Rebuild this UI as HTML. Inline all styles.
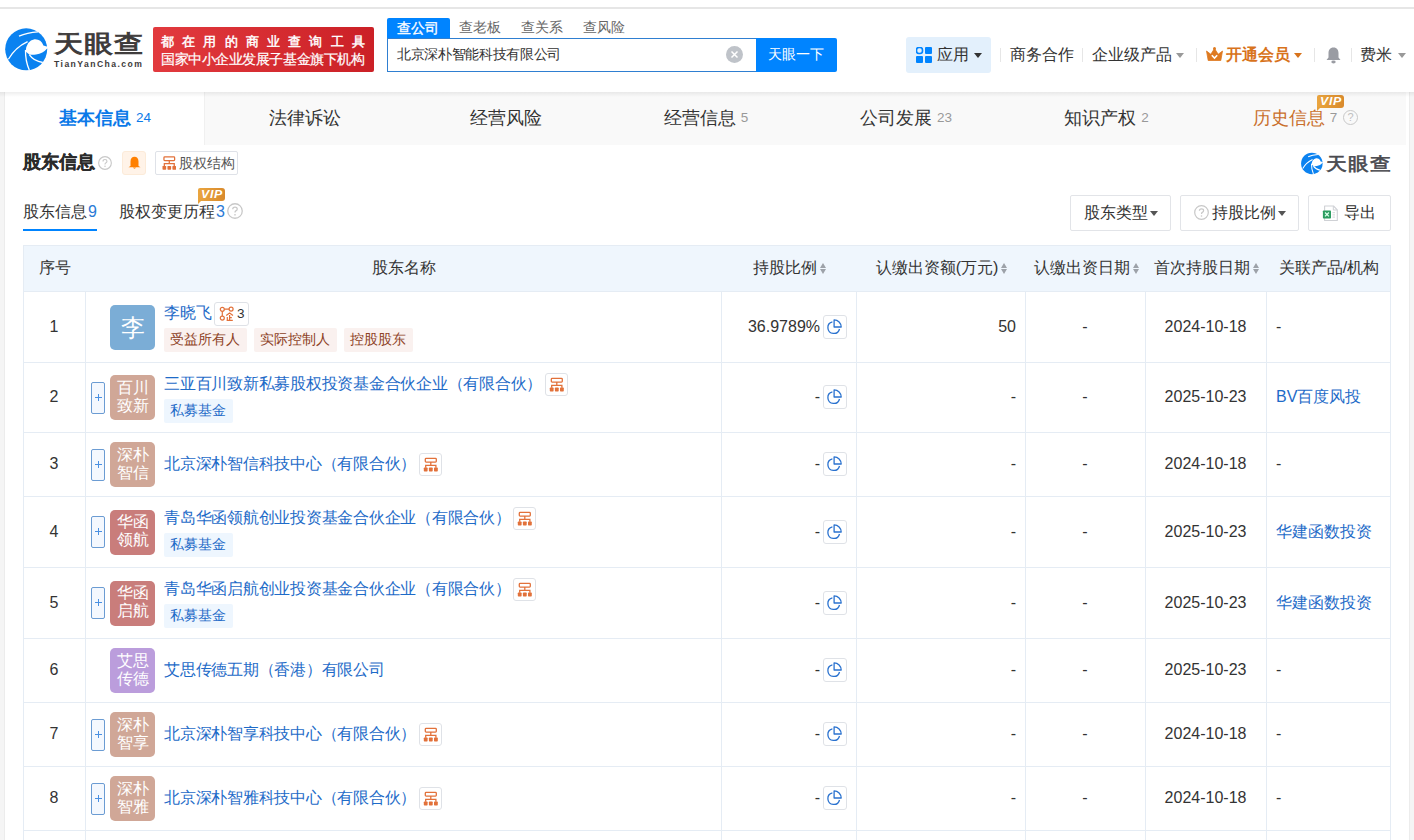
<!DOCTYPE html>
<html><head><meta charset="utf-8">
<style>
*{box-sizing:border-box;margin:0;padding:0}
html,body{width:1414px;height:840px;overflow:hidden}
body{position:relative;background:#f5f5f5;font-family:"Liberation Sans",sans-serif;color:#333}
.abs{position:absolute}
.t{position:absolute;white-space:nowrap}
#top{left:0;top:0;width:1414px;height:92px;background:#fff}
#topline{left:0;top:7px;width:1414px;height:2px;background:#e6e6e6}
#card{left:5px;top:92px;width:1404px;height:760px;background:#fff;box-shadow:-1px 0 0 #ececec,1px 0 0 #ececec}
#tabs{left:5px;top:92px;width:1401px;height:53px;background:#f9f9f9}
.tab{position:absolute;top:0;height:53px;font-size:18px;line-height:53px;text-align:center;color:#333}
.tab .n{font-size:13.5px;color:#999;margin-left:5px;position:relative;top:-2px}
.caret{width:0;height:0;border-left:4px solid transparent;border-right:4px solid transparent;border-top:5px solid #999}
.sep{top:48px;width:1px;height:14px;background:#e6e6e6}
.btn{position:absolute;border:1px solid #e2e4e8;border-radius:2px;background:#fff}
.vip{position:absolute;width:27px;height:12.5px;background:linear-gradient(90deg,#eaa53f,#d98a2c);border-radius:2px 3px 3px 0}
.vip:after{content:"";position:absolute;left:0;top:12px;border-left:4px solid #e6a03b;border-bottom:4px solid transparent}
.vip span{position:absolute;left:2.5px;top:0;font-size:11px;line-height:12.5px;font-weight:bold;font-style:italic;color:#fff;letter-spacing:0.6px;transform:scaleX(1.12);transform-origin:0 0}
.hl{position:absolute;left:23px;width:1368px;height:1px;background:#e5ecf4}
.vl{position:absolute;width:1px;background:#e5ecf4}
.th{position:absolute;top:257px;height:22px;font-size:16px;line-height:22px;color:#333;text-align:center;white-space:nowrap}
.sort{display:inline-block;width:7px;height:11px;margin-left:3px;vertical-align:-1px;position:relative}
.sort:before{content:"";position:absolute;left:0;top:0;border-left:3.5px solid transparent;border-right:3.5px solid transparent;border-bottom:5px solid #9da2a9}
.sort:after{content:"";position:absolute;left:0;top:6px;border-left:3.5px solid transparent;border-right:3.5px solid transparent;border-top:5px solid #9da2a9}
.td{position:absolute;height:22px;font-size:16px;line-height:22px;color:#333;white-space:nowrap}
.lnk{color:#1e6bc8}
.plus{position:absolute;left:91px;width:14px;height:32px;border:1px solid #6b9cd3;border-radius:2px;background:#f4f8fe}
.plus span{position:absolute;left:3px;top:14px;width:7px;height:1.4px;background:#4a90e2;font-size:0}.plus span:after{content:"";position:absolute;left:2.8px;top:-2.8px;width:1.4px;height:7px;background:#4a90e2}
.av{position:absolute;left:110px;width:45px;height:45px;border-radius:5px;color:#fff;text-align:center}
.av1{display:block;font-size:24px;line-height:45px}
.av2{display:block;font-size:16px;line-height:18px;padding-top:3.5px}
.nm{position:absolute;left:164px;height:24px;font-size:16px;line-height:24px;color:#1e6bc8;white-space:nowrap;letter-spacing:-0.25px}
.badge{position:absolute;left:214px;width:35px;height:24.5px;border:1px solid #dfe2e7;border-radius:3px;background:#fff}
.badge svg{position:absolute;left:-1px;top:-1px}
.badge span{position:absolute;left:22px;top:1px;font-size:13.5px;line-height:20px;color:#333}
.orgb{position:absolute;width:23px;height:23.5px;border:1px solid #dfe2e7;border-radius:3px;background:#fff}
.orgb svg{position:absolute;left:-1px;top:-1px}
.tag{position:absolute;height:24px;font-size:14px;line-height:22px;text-align:center;border-radius:2px;white-space:nowrap}
.tag.r{background:#faf1ef;color:#8e4226}
.tag.b{background:#eef6fe;color:#1e6bc8}
.pie{position:absolute;left:823px;width:23.5px;height:24px;border:1px solid #dfe2e7;border-radius:3px;background:#fff}
.pie svg{position:absolute;left:-1px;top:-1px}
.q{display:inline-block;width:15px;height:15px;border:1.2px solid #c8c8c8;border-radius:50%;position:relative;vertical-align:-1px}
.q:after{content:"?";position:absolute;left:0;top:0;width:12.6px;text-align:center;font-size:11px;line-height:12.6px;color:#c0c0c0;font-style:normal}
</style></head><body>
<div id="top" class="abs">
  <svg class="abs" style="left:5px;top:28px" width="43" height="43" viewBox="0 0 43 43"><circle cx="21.2" cy="21.3" r="21" fill="#0b82f0"/><path d="M20.6 23.5Q21.5 12.5 29.5 11.2Q36 10.8 38.4 17.4L42.6 18.8L42.4 20.2Q38 25.5 31 26.6Q27 27 24.3 26.6Z" fill="#fff"/><path d="M14 8.2Q22 4.6 33 3.9" stroke="#fff" stroke-width="1.3" fill="none"/><path d="M3.4 31.3Q10 19.5 22.6 13.6" stroke="#fff" stroke-width="1.3" fill="none"/><path d="M20.5 22Q20.3 33 24.3 42" stroke="#fff" stroke-width="1.3" fill="none"/><path d="M24.3 26.6Q28.5 33 37.8 34.5" stroke="#fff" stroke-width="1.3" fill="none"/></svg>
  <div class="t" style="left:53.5px;top:27.5px;font-size:29px;line-height:32px;color:#3d3a3a;letter-spacing:1px;-webkit-text-stroke:1.1px #3d3a3a;transform:scaleY(0.82);transform-origin:0 50%">天眼查</div>
  <div class="t" style="left:54px;top:58px;font-size:8.6px;line-height:12px;font-weight:bold;color:#3d3a3a;letter-spacing:1.45px">TianYanCha.com</div>
  <div class="abs" style="left:153px;top:27px;width:221px;height:45px;border-radius:2px;background:linear-gradient(90deg,#e23a3e,#cb2026)"></div>
  <div class="t" style="left:161px;top:33px;font-size:13px;line-height:17px;color:#fff;letter-spacing:8.2px;-webkit-text-stroke:0.45px #fff">都在用的商业查询工具</div>
  <div class="t" style="left:161px;top:51px;font-size:13.5px;line-height:18px;color:#fff;letter-spacing:-0.45px;-webkit-text-stroke:0.2px #fff">国家中小企业发展子基金旗下机构</div>
  <div class="abs" style="left:387px;top:18px;width:63px;height:21px;background:#0084ff;border-radius:2px 2px 0 0"></div>
  <div class="t" style="left:397px;top:19px;font-size:14px;line-height:18px;color:#fff;-webkit-text-stroke:0.35px #fff">查公司</div>
  <div class="t" style="left:459px;top:18px;font-size:14px;line-height:18px;color:#666">查老板</div>
  <div class="t" style="left:521px;top:18px;font-size:14px;line-height:18px;color:#666">查关系</div>
  <div class="t" style="left:583px;top:18px;font-size:14px;line-height:18px;color:#666">查风险</div>
  <div class="abs" style="left:387px;top:38px;width:370px;height:34px;border:1px solid #2f7fd1;border-right:none;background:#fff"></div>
  <div class="t" style="left:397px;top:45px;font-size:13.5px;line-height:20px;color:#333;letter-spacing:-0.33px">北京深朴智能科技有限公司</div>
  <svg class="abs" style="left:726px;top:46px" width="17" height="17" viewBox="0 0 17 17"><circle cx="8.5" cy="8.5" r="8.5" fill="#bfc3c9"/><path d="M5.5 5.5L11.5 11.5M11.5 5.5L5.5 11.5" stroke="#fff" stroke-width="1.5"/></svg>
  <div class="abs" style="left:756px;top:38px;width:81px;height:34px;background:#0084ff;border-radius:0 2px 2px 0"></div>
  <div class="t" style="left:768px;top:44px;font-size:14px;line-height:20px;color:#fff">天眼一下</div>
  <div class="abs" style="left:906px;top:37px;width:85px;height:36px;background:#e3f0fc;border-radius:3px"></div>
  <svg class="abs" style="left:916px;top:47px" width="16" height="16" viewBox="0 0 16 16"><rect x="0.5" y="0.5" width="6" height="6" rx="2.5" fill="none" stroke="#0084ff" stroke-width="1.6"/><rect x="9" y="0" width="7" height="7" rx="1" fill="#0084ff"/><rect x="0" y="9" width="7" height="7" rx="1" fill="#0084ff"/><rect x="9" y="9" width="7" height="7" rx="1" fill="#0084ff"/></svg>
  <div class="t" style="left:937px;top:45px;font-size:16px;line-height:20px;color:#333">应用</div>
  <div class="abs caret" style="left:974px;top:53px;border-top-color:#333"></div>
  <div class="abs sep" style="left:1000px"></div>
  <div class="t" style="left:1010px;top:45px;font-size:16px;line-height:20px;color:#333">商务合作</div>
  <div class="abs sep" style="left:1082px"></div>
  <div class="t" style="left:1092px;top:45px;font-size:16px;line-height:20px;color:#333">企业级产品</div>
  <div class="abs caret" style="left:1176px;top:53px"></div>
  <div class="abs sep" style="left:1196px"></div>
  <svg class="abs" style="left:1206px;top:47px" width="17" height="14" viewBox="0 0 17 14"><path d="M0.5 4L4.8 7.3L8.5 1.5L12.2 7.3L16.5 4L14.8 13.5H2.2Z" fill="#de7a21" stroke="#de7a21" stroke-width="0.8" stroke-linejoin="round"/><circle cx="8.5" cy="1.6" r="1.5" fill="#de7a21"/><path d="M5.8 8.2L8.5 11L11.2 8.2" stroke="#fff" stroke-width="1.6" fill="none"/></svg>
  <div class="t" style="left:1226px;top:45px;font-size:16px;line-height:20px;color:#d8731c;font-weight:bold">开通会员</div>
  <div class="abs caret" style="left:1294px;top:53px;border-top-color:#d8731c"></div>
  <div class="abs sep" style="left:1314px"></div>
  <svg class="abs" style="left:1325px;top:46px" width="17" height="18" viewBox="0 0 17 18"><path d="M8.5 1.5C5 1.5 3.5 4 3.5 7V11.5L1.5 14H15.5L13.5 11.5V7C13.5 4 12 1.5 8.5 1.5Z" fill="#9a9ca3"/><ellipse cx="8.5" cy="16" rx="2.2" ry="1.4" fill="#9a9ca3"/></svg>
  <div class="abs sep" style="left:1351px"></div>
  <div class="t" style="left:1360px;top:45px;font-size:16px;line-height:20px;color:#333">费米</div>
  <div class="abs caret" style="left:1398px;top:53px"></div>
</div>
<div id="topline" class="abs"></div>
<div class="abs" style="left:0;top:92px;width:1414px;height:5px;background:linear-gradient(rgba(0,0,0,0.065),rgba(0,0,0,0));z-index:5"></div>
<div id="card" class="abs"></div>
<div id="tabs" class="abs">
  <div class="tab" style="left:0;width:200px;background:#fff;color:#0b79e8;font-weight:bold">基本信息<span class="n" style="color:#0b79e8;font-weight:normal">24</span></div>
  <div class="tab" style="left:199px;width:201px;border-left:1px solid #f0f0f0">法律诉讼</div>
  <div class="tab" style="left:400px;width:201px">经营风险</div>
  <div class="tab" style="left:601px;width:200px">经营信息<span class="n">5</span></div>
  <div class="tab" style="left:801px;width:200px">公司发展<span class="n">23</span></div>
  <div class="tab" style="left:1001px;width:201px">知识产权<span class="n">2</span></div>
  <div class="tab" style="left:1202px;width:199px;color:#c96f2c;padding-right:2px">历史信息<span class="n">7</span><i class="q" style="margin-left:6px"></i></div>
</div>

<div class="t" style="left:22.5px;top:150px;font-size:17.5px;line-height:24px;font-weight:bold;color:#2b2b2b;-webkit-text-stroke:0.3px #2b2b2b">股东信息</div>
<svg class="abs" style="left:98px;top:156px" width="14" height="14" viewBox="0 0 15 15"><circle cx="7.5" cy="7.5" r="6.8" fill="none" stroke="#c8c8c8" stroke-width="1.2"/><path d="M5.4 5.8Q5.4 3.8 7.5 3.8Q9.6 3.8 9.6 5.6Q9.6 6.8 8.3 7.4Q7.5 7.8 7.5 9" stroke="#c8c8c8" stroke-width="1.2" fill="none"/><circle cx="7.5" cy="11" r="0.8" fill="#c8c8c8"/></svg>
<div class="abs" style="left:122px;top:151px;width:24px;height:24px;background:#fff3e8;border:1px solid #fcebd9;border-radius:3px"></div>
<svg class="abs" style="left:127.5px;top:156px" width="13" height="14" viewBox="0 0 13 14"><path d="M6.5 0.8C4 0.8 2.5 2.8 2.5 5.5V10L0.5 11.3H12.5L10.5 10V5.5C10.5 2.8 9 0.8 6.5 0.8Z" fill="#ff8000"/><path d="M4.8 11.5Q6.5 13.8 8.2 11.5Z" fill="#ff8000"/></svg>
<div class="abs" style="left:155px;top:151px;width:83px;height:24px;background:#fff;border:1px solid #dfe2e8;border-radius:2px"></div>
<svg class="abs" style="left:161.7px;top:156px" width="14.2" height="14" viewBox="4.3 4.6 14.6 14"><rect x="6.3" y="5.4" width="11" height="3.7" rx="0.8" fill="none" stroke="#e2713a" stroke-width="1.3"/><path d="M11.8 9.1V12.3M6.7 14.8V12.3H16.9V14.8" stroke="#e2713a" stroke-width="1.3" fill="none"/><rect x="4.8" y="14.6" width="3.8" height="3.9" rx="0.7" fill="#e2713a"/><rect x="9.9" y="14.6" width="3.8" height="3.9" rx="0.7" fill="#e2713a"/><rect x="15" y="14.6" width="3.8" height="3.9" rx="0.7" fill="#e2713a"/></svg>
<div class="t" style="left:179px;top:153px;font-size:14px;line-height:20px;color:#555">股权结构</div>

<svg class="abs" style="left:1301px;top:152px" width="22" height="23" viewBox="0 0 43 43"><circle cx="21.2" cy="21.3" r="21" fill="#0b82f0"/><path d="M20.6 23.5Q21.5 12.5 29.5 11.2Q36 10.8 38.4 17.4L42.6 18.8L42.4 20.2Q38 25.5 31 26.6Q27 27 24.3 26.6Z" fill="#fff"/><path d="M14 8.2Q22 4.6 33 3.9" stroke="#fff" stroke-width="2" fill="none"/><path d="M3.4 31.3Q10 19.5 22.6 13.6" stroke="#fff" stroke-width="2" fill="none"/><path d="M20.5 22Q20.3 33 24.3 42" stroke="#fff" stroke-width="2" fill="none"/><path d="M24.3 26.6Q28.5 33 37.8 34.5" stroke="#fff" stroke-width="2" fill="none"/></svg>
<div class="t" style="left:1326px;top:150px;font-size:21px;line-height:27px;color:#4a4a4f;letter-spacing:0.8px;-webkit-text-stroke:0.7px #4a4a4f;transform:scaleY(0.86);transform-origin:0 50%">天眼查</div>

<div class="t" style="left:23px;top:201px;font-size:16px;line-height:22px;color:#333">股东信息<span style="color:#2a7ad6;margin-left:1px">9</span></div>
<div class="abs" style="left:23px;top:229px;width:74px;height:2px;background:#0084ff"></div>
<div class="t" style="left:119px;top:201px;font-size:16px;line-height:22px;color:#333">股权变更历程<span style="color:#2a7ad6;margin-left:1px">3</span></div>
<svg class="abs" style="left:227px;top:203px" width="16" height="16" viewBox="0 0 15 15"><circle cx="7.5" cy="7.5" r="6.8" fill="none" stroke="#c8c8c8" stroke-width="1.2"/><path d="M5.4 5.8Q5.4 3.8 7.5 3.8Q9.6 3.8 9.6 5.6Q9.6 6.8 8.3 7.4Q7.5 7.8 7.5 9" stroke="#c8c8c8" stroke-width="1.2" fill="none"/><circle cx="7.5" cy="11" r="0.8" fill="#c8c8c8"/></svg>
<div class="vip" style="left:198px;top:188px"><span>VIP</span></div>

<div class="btn" style="left:1070px;top:195px;width:101px;height:36px"></div>
<div class="t" style="left:1084px;top:202px;font-size:16px;line-height:22px;color:#333">股东类型</div>
<div class="abs caret" style="left:1150px;top:211px;border-top-color:#555"></div>
<div class="btn" style="left:1180px;top:195px;width:119px;height:36px"></div>
<svg class="abs" style="left:1194px;top:205px" width="15" height="15" viewBox="0 0 15 15"><circle cx="7.5" cy="7.5" r="6.8" fill="none" stroke="#c8c8c8" stroke-width="1.2"/><path d="M5.4 5.8Q5.4 3.8 7.5 3.8Q9.6 3.8 9.6 5.6Q9.6 6.8 8.3 7.4Q7.5 7.8 7.5 9" stroke="#c8c8c8" stroke-width="1.2" fill="none"/><circle cx="7.5" cy="11" r="0.8" fill="#c8c8c8"/></svg>
<div class="t" style="left:1212px;top:202px;font-size:16px;line-height:22px;color:#333">持股比例</div>
<div class="abs caret" style="left:1278px;top:211px;border-top-color:#555"></div>
<div class="btn" style="left:1308px;top:195px;width:83px;height:36px"></div>
<svg class="abs" style="left:1322px;top:204.5px" width="17" height="17" viewBox="0 0 17 17"><path d="M2.6 1H11.5L15.3 4.8V15.5H2.6Z" fill="#fff" stroke="#cfd1d5" stroke-width="1.1" stroke-linejoin="round"/><path d="M11.3 1.2V5H15" fill="none" stroke="#cfd1d5" stroke-width="1"/><path d="M10.5 7.7H13M10.5 9.9H13M10.5 12.1H13" stroke="#dcdde0" stroke-width="1.2"/><rect x="0.9" y="5.4" width="8.1" height="8.1" rx="0.8" fill="#2c9d60"/><path d="M3 7.5L6.9 11.4M6.9 7.5L3 11.4" stroke="#d9ffe9" stroke-width="1.3"/></svg>
<div class="t" style="left:1344px;top:202px;font-size:16px;line-height:22px;color:#333">导出</div>
<div class="vip" style="left:1317px;top:95px"><span>VIP</span></div>
<!--TABLE-->
<div class="abs" style="left:23px;top:245px;width:1368px;height:46px;background:#eff6fd"></div>
<div class="hl" style="top:245px"></div>
<div class="hl" style="top:291px"></div>
<div class="hl" style="top:362px"></div>
<div class="hl" style="top:432px"></div>
<div class="hl" style="top:496px"></div>
<div class="hl" style="top:567px"></div>
<div class="hl" style="top:638px"></div>
<div class="hl" style="top:702px"></div>
<div class="hl" style="top:766px"></div>
<div class="hl" style="top:830px"></div>
<div class="vl" style="left:23px;top:245px;height:595px"></div>
<div class="vl" style="left:1390px;top:245px;height:595px"></div>
<div class="vl" style="left:85px;top:291px;height:549px"></div>
<div class="vl" style="left:721px;top:291px;height:549px"></div>
<div class="vl" style="left:856px;top:291px;height:549px"></div>
<div class="vl" style="left:1025px;top:291px;height:549px"></div>
<div class="vl" style="left:1145px;top:291px;height:549px"></div>
<div class="vl" style="left:1266px;top:291px;height:549px"></div>
<div class="th" style="left:23px;width:62px;text-align:left;padding-left:16px">序号</div>
<div class="th" style="left:85px;width:636px;padding-left:2px">股东名称</div>
<div class="th" style="left:721px;width:135px;padding-left:3px">持股比例<i class="sort"></i></div>
<div class="th" style="left:856px;width:169px;padding-left:3px">认缴出资额(万元)<i class="sort"></i></div>
<div class="th" style="left:1025px;width:120px;padding-left:3px">认缴出资日期<i class="sort"></i></div>
<div class="th" style="left:1145px;width:121px;padding-left:3px">首次持股日期<i class="sort"></i></div>
<div class="th" style="left:1266px;width:124px;padding-left:2px">关联产品/机构</div>
<div class="td" style="left:23px;width:62px;top:315.5px;text-align:center">1</div>
<div class="av" style="top:304.5px;background:#7badd6"><span class="av1">李</span></div>
<div class="nm" style="top:300.5px">李晓飞</div>
<div class="badge" style="top:301.5px"><svg width="34" height="23" viewBox="0 0 34 23"><circle cx="8.3" cy="7.3" r="2" fill="none" stroke="#e2713a" stroke-width="1.2"/><circle cx="17.1" cy="7.1" r="2" fill="none" stroke="#e2713a" stroke-width="1.2"/><circle cx="8.3" cy="16.1" r="2" fill="none" stroke="#e2713a" stroke-width="1.2"/><path d="M10.3 7.2H15.1M8.3 9.3V14.1M12.2 13.4L15.6 10.9L19 13.4M15.6 13V18.3M12.6 18.4H18.8M15.6 15.6H17.8M13.3 15V18.4" stroke="#e2713a" stroke-width="1.2" fill="none"/></svg><span>3</span></div>
<div class="tag r" style="left:164px;top:328.3px;width:82.6px">受益所有人</div>
<div class="tag r" style="left:254.0px;top:328.3px;width:82.6px">实际控制人</div>
<div class="tag r" style="left:344.0px;top:328.3px;width:68.6px">控股股东</div>
<div class="td" style="left:721px;width:99px;top:315.5px;text-align:right">36.9789%</div>
<div class="pie" style="top:314.5px"><svg width="23" height="24" viewBox="0 0 23 24"><path d="M9.4 6.8A5.9 5.9 0 1 0 16.5 14" fill="none" stroke="#2a72cf" stroke-width="1.3"/><path d="M11.1 12V4.9A7.1 7.1 0 0 1 18.2 12Z" fill="none" stroke="#2a72cf" stroke-width="1.3" stroke-linejoin="round"/></svg></div>
<div class="td" style="left:856px;width:160px;top:315.5px;text-align:right">50</div>
<div class="td" style="left:1025px;width:120px;top:315.5px;text-align:center">-</div>
<div class="td" style="left:1145px;width:121px;top:315.5px;text-align:center">2024-10-18</div>
<div class="td" style="left:1276px;top:315.5px">-</div>
<div class="td" style="left:23px;width:62px;top:386.0px;text-align:center">2</div>
<div class="plus" style="top:381.5px"><span>+</span></div>
<div class="av" style="top:375.0px;background:#d0a797"><span class="av2">百川<br>致新</span></div>
<div class="nm" style="top:371.5px">三亚百川致新私募股权投资基金合伙企业（有限合伙）</div>
<div class="orgb" style="left:545px;top:372.5px"><svg width="23" height="23" viewBox="0 0 23 23"><rect x="6.3" y="5.4" width="11" height="3.7" rx="0.8" fill="none" stroke="#e2713a" stroke-width="1.3"/><path d="M11.8 9.1V12.3M6.7 14.8V12.3H16.9V14.8" stroke="#e2713a" stroke-width="1.3" fill="none"/><rect x="4.8" y="14.6" width="3.8" height="3.9" rx="0.7" fill="#e2713a"/><rect x="9.9" y="14.6" width="3.8" height="3.9" rx="0.7" fill="#e2713a"/><rect x="15" y="14.6" width="3.8" height="3.9" rx="0.7" fill="#e2713a"/></svg></div>
<div class="tag b" style="left:164px;top:399.3px;width:68.6px">私募基金</div>
<div class="td" style="left:721px;width:99px;top:386.0px;text-align:right">-</div>
<div class="pie" style="top:385.0px"><svg width="23" height="24" viewBox="0 0 23 24"><path d="M9.4 6.8A5.9 5.9 0 1 0 16.5 14" fill="none" stroke="#2a72cf" stroke-width="1.3"/><path d="M11.1 12V4.9A7.1 7.1 0 0 1 18.2 12Z" fill="none" stroke="#2a72cf" stroke-width="1.3" stroke-linejoin="round"/></svg></div>
<div class="td" style="left:856px;width:160px;top:386.0px;text-align:right">-</div>
<div class="td" style="left:1025px;width:120px;top:386.0px;text-align:center">-</div>
<div class="td" style="left:1145px;width:121px;top:386.0px;text-align:center">2025-10-23</div>
<div class="td lnk" style="left:1276px;top:386.0px">BV百度风投</div>
<div class="td" style="left:23px;width:62px;top:453.0px;text-align:center">3</div>
<div class="plus" style="top:448.5px"><span>+</span></div>
<div class="av" style="top:442.0px;background:#d0a797"><span class="av2">深朴<br>智信</span></div>
<div class="nm" style="top:451.5px">北京深朴智信科技中心（有限合伙）</div>
<div class="orgb" style="left:419px;top:452.5px"><svg width="23" height="23" viewBox="0 0 23 23"><rect x="6.3" y="5.4" width="11" height="3.7" rx="0.8" fill="none" stroke="#e2713a" stroke-width="1.3"/><path d="M11.8 9.1V12.3M6.7 14.8V12.3H16.9V14.8" stroke="#e2713a" stroke-width="1.3" fill="none"/><rect x="4.8" y="14.6" width="3.8" height="3.9" rx="0.7" fill="#e2713a"/><rect x="9.9" y="14.6" width="3.8" height="3.9" rx="0.7" fill="#e2713a"/><rect x="15" y="14.6" width="3.8" height="3.9" rx="0.7" fill="#e2713a"/></svg></div>
<div class="td" style="left:721px;width:99px;top:453.0px;text-align:right">-</div>
<div class="pie" style="top:452.0px"><svg width="23" height="24" viewBox="0 0 23 24"><path d="M9.4 6.8A5.9 5.9 0 1 0 16.5 14" fill="none" stroke="#2a72cf" stroke-width="1.3"/><path d="M11.1 12V4.9A7.1 7.1 0 0 1 18.2 12Z" fill="none" stroke="#2a72cf" stroke-width="1.3" stroke-linejoin="round"/></svg></div>
<div class="td" style="left:856px;width:160px;top:453.0px;text-align:right">-</div>
<div class="td" style="left:1025px;width:120px;top:453.0px;text-align:center">-</div>
<div class="td" style="left:1145px;width:121px;top:453.0px;text-align:center">2024-10-18</div>
<div class="td" style="left:1276px;top:453.0px">-</div>
<div class="td" style="left:23px;width:62px;top:520.5px;text-align:center">4</div>
<div class="plus" style="top:516.0px"><span>+</span></div>
<div class="av" style="top:509.5px;background:#c97d7b"><span class="av2">华函<br>领航</span></div>
<div class="nm" style="top:505.5px">青岛华函领航创业投资基金合伙企业（有限合伙）</div>
<div class="orgb" style="left:513px;top:506.5px"><svg width="23" height="23" viewBox="0 0 23 23"><rect x="6.3" y="5.4" width="11" height="3.7" rx="0.8" fill="none" stroke="#e2713a" stroke-width="1.3"/><path d="M11.8 9.1V12.3M6.7 14.8V12.3H16.9V14.8" stroke="#e2713a" stroke-width="1.3" fill="none"/><rect x="4.8" y="14.6" width="3.8" height="3.9" rx="0.7" fill="#e2713a"/><rect x="9.9" y="14.6" width="3.8" height="3.9" rx="0.7" fill="#e2713a"/><rect x="15" y="14.6" width="3.8" height="3.9" rx="0.7" fill="#e2713a"/></svg></div>
<div class="tag b" style="left:164px;top:533.3px;width:68.6px">私募基金</div>
<div class="td" style="left:721px;width:99px;top:520.5px;text-align:right">-</div>
<div class="pie" style="top:519.5px"><svg width="23" height="24" viewBox="0 0 23 24"><path d="M9.4 6.8A5.9 5.9 0 1 0 16.5 14" fill="none" stroke="#2a72cf" stroke-width="1.3"/><path d="M11.1 12V4.9A7.1 7.1 0 0 1 18.2 12Z" fill="none" stroke="#2a72cf" stroke-width="1.3" stroke-linejoin="round"/></svg></div>
<div class="td" style="left:856px;width:160px;top:520.5px;text-align:right">-</div>
<div class="td" style="left:1025px;width:120px;top:520.5px;text-align:center">-</div>
<div class="td" style="left:1145px;width:121px;top:520.5px;text-align:center">2025-10-23</div>
<div class="td lnk" style="left:1276px;top:520.5px">华建函数投资</div>
<div class="td" style="left:23px;width:62px;top:591.5px;text-align:center">5</div>
<div class="plus" style="top:587.0px"><span>+</span></div>
<div class="av" style="top:580.5px;background:#c97d7b"><span class="av2">华函<br>启航</span></div>
<div class="nm" style="top:576.5px">青岛华函启航创业投资基金合伙企业（有限合伙）</div>
<div class="orgb" style="left:513px;top:577.5px"><svg width="23" height="23" viewBox="0 0 23 23"><rect x="6.3" y="5.4" width="11" height="3.7" rx="0.8" fill="none" stroke="#e2713a" stroke-width="1.3"/><path d="M11.8 9.1V12.3M6.7 14.8V12.3H16.9V14.8" stroke="#e2713a" stroke-width="1.3" fill="none"/><rect x="4.8" y="14.6" width="3.8" height="3.9" rx="0.7" fill="#e2713a"/><rect x="9.9" y="14.6" width="3.8" height="3.9" rx="0.7" fill="#e2713a"/><rect x="15" y="14.6" width="3.8" height="3.9" rx="0.7" fill="#e2713a"/></svg></div>
<div class="tag b" style="left:164px;top:604.3px;width:68.6px">私募基金</div>
<div class="td" style="left:721px;width:99px;top:591.5px;text-align:right">-</div>
<div class="pie" style="top:590.5px"><svg width="23" height="24" viewBox="0 0 23 24"><path d="M9.4 6.8A5.9 5.9 0 1 0 16.5 14" fill="none" stroke="#2a72cf" stroke-width="1.3"/><path d="M11.1 12V4.9A7.1 7.1 0 0 1 18.2 12Z" fill="none" stroke="#2a72cf" stroke-width="1.3" stroke-linejoin="round"/></svg></div>
<div class="td" style="left:856px;width:160px;top:591.5px;text-align:right">-</div>
<div class="td" style="left:1025px;width:120px;top:591.5px;text-align:center">-</div>
<div class="td" style="left:1145px;width:121px;top:591.5px;text-align:center">2025-10-23</div>
<div class="td lnk" style="left:1276px;top:591.5px">华建函数投资</div>
<div class="td" style="left:23px;width:62px;top:659.0px;text-align:center">6</div>
<div class="av" style="top:648.0px;background:#bb9ddc"><span class="av2">艾思<br>传德</span></div>
<div class="nm" style="top:657.5px">艾思传德五期（香港）有限公司</div>
<div class="td" style="left:721px;width:99px;top:659.0px;text-align:right">-</div>
<div class="pie" style="top:658.0px"><svg width="23" height="24" viewBox="0 0 23 24"><path d="M9.4 6.8A5.9 5.9 0 1 0 16.5 14" fill="none" stroke="#2a72cf" stroke-width="1.3"/><path d="M11.1 12V4.9A7.1 7.1 0 0 1 18.2 12Z" fill="none" stroke="#2a72cf" stroke-width="1.3" stroke-linejoin="round"/></svg></div>
<div class="td" style="left:856px;width:160px;top:659.0px;text-align:right">-</div>
<div class="td" style="left:1025px;width:120px;top:659.0px;text-align:center">-</div>
<div class="td" style="left:1145px;width:121px;top:659.0px;text-align:center">2025-10-23</div>
<div class="td" style="left:1276px;top:659.0px">-</div>
<div class="td" style="left:23px;width:62px;top:723.0px;text-align:center">7</div>
<div class="plus" style="top:718.5px"><span>+</span></div>
<div class="av" style="top:712.0px;background:#d0a797"><span class="av2">深朴<br>智享</span></div>
<div class="nm" style="top:721.5px">北京深朴智享科技中心（有限合伙）</div>
<div class="orgb" style="left:419px;top:722.5px"><svg width="23" height="23" viewBox="0 0 23 23"><rect x="6.3" y="5.4" width="11" height="3.7" rx="0.8" fill="none" stroke="#e2713a" stroke-width="1.3"/><path d="M11.8 9.1V12.3M6.7 14.8V12.3H16.9V14.8" stroke="#e2713a" stroke-width="1.3" fill="none"/><rect x="4.8" y="14.6" width="3.8" height="3.9" rx="0.7" fill="#e2713a"/><rect x="9.9" y="14.6" width="3.8" height="3.9" rx="0.7" fill="#e2713a"/><rect x="15" y="14.6" width="3.8" height="3.9" rx="0.7" fill="#e2713a"/></svg></div>
<div class="td" style="left:721px;width:99px;top:723.0px;text-align:right">-</div>
<div class="pie" style="top:722.0px"><svg width="23" height="24" viewBox="0 0 23 24"><path d="M9.4 6.8A5.9 5.9 0 1 0 16.5 14" fill="none" stroke="#2a72cf" stroke-width="1.3"/><path d="M11.1 12V4.9A7.1 7.1 0 0 1 18.2 12Z" fill="none" stroke="#2a72cf" stroke-width="1.3" stroke-linejoin="round"/></svg></div>
<div class="td" style="left:856px;width:160px;top:723.0px;text-align:right">-</div>
<div class="td" style="left:1025px;width:120px;top:723.0px;text-align:center">-</div>
<div class="td" style="left:1145px;width:121px;top:723.0px;text-align:center">2024-10-18</div>
<div class="td" style="left:1276px;top:723.0px">-</div>
<div class="td" style="left:23px;width:62px;top:787.0px;text-align:center">8</div>
<div class="plus" style="top:782.5px"><span>+</span></div>
<div class="av" style="top:776.0px;background:#d0a797"><span class="av2">深朴<br>智雅</span></div>
<div class="nm" style="top:785.5px">北京深朴智雅科技中心（有限合伙）</div>
<div class="orgb" style="left:419px;top:786.5px"><svg width="23" height="23" viewBox="0 0 23 23"><rect x="6.3" y="5.4" width="11" height="3.7" rx="0.8" fill="none" stroke="#e2713a" stroke-width="1.3"/><path d="M11.8 9.1V12.3M6.7 14.8V12.3H16.9V14.8" stroke="#e2713a" stroke-width="1.3" fill="none"/><rect x="4.8" y="14.6" width="3.8" height="3.9" rx="0.7" fill="#e2713a"/><rect x="9.9" y="14.6" width="3.8" height="3.9" rx="0.7" fill="#e2713a"/><rect x="15" y="14.6" width="3.8" height="3.9" rx="0.7" fill="#e2713a"/></svg></div>
<div class="td" style="left:721px;width:99px;top:787.0px;text-align:right">-</div>
<div class="pie" style="top:786.0px"><svg width="23" height="24" viewBox="0 0 23 24"><path d="M9.4 6.8A5.9 5.9 0 1 0 16.5 14" fill="none" stroke="#2a72cf" stroke-width="1.3"/><path d="M11.1 12V4.9A7.1 7.1 0 0 1 18.2 12Z" fill="none" stroke="#2a72cf" stroke-width="1.3" stroke-linejoin="round"/></svg></div>
<div class="td" style="left:856px;width:160px;top:787.0px;text-align:right">-</div>
<div class="td" style="left:1025px;width:120px;top:787.0px;text-align:center">-</div>
<div class="td" style="left:1145px;width:121px;top:787.0px;text-align:center">2024-10-18</div>
<div class="td" style="left:1276px;top:787.0px">-</div>
<!--/TABLE-->
</body></html>
